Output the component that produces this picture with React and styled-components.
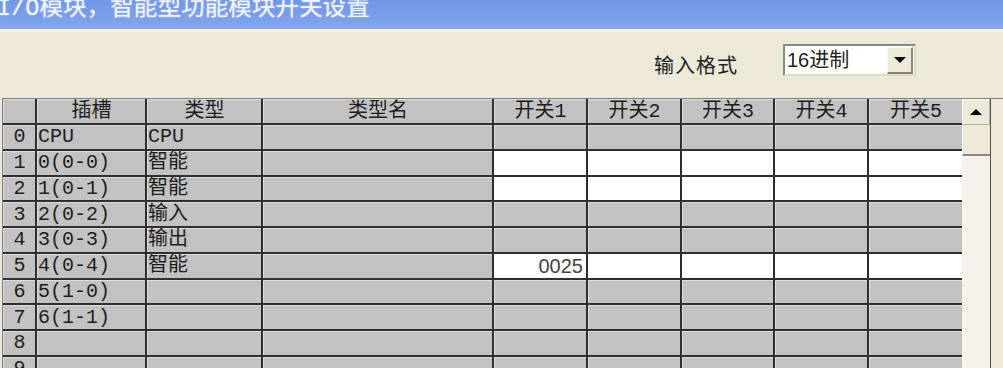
import styled, { createGlobalStyle } from 'styled-components'

const GlobalStyle = createGlobalStyle`
  html, body {
    margin: 0;
    padding: 0;
    background: #ece9d8;
    overflow: hidden;
  }
  #root {
    width: 1003px;
    height: 368px;
  }
`

const CJK = `"Liberation Mono", "Noto Sans CJK SC", monospace`
const SANS = `"Liberation Sans", "Noto Sans CJK SC", sans-serif`

const COLS = [34, 110, 116, 231, 94, 94, 93, 94, 93]
const HEADERS = ['', '插槽', '类型', '类型名', '开关1', '开关2', '开关3', '开关4', '开关5']

const ROWS = [
  { slot: 'CPU', type: 'CPU' },
  { slot: '0(0-0)', type: '智能', edit: true },
  { slot: '1(0-1)', type: '智能', edit: true },
  { slot: '2(0-2)', type: '输入' },
  { slot: '3(0-3)', type: '输出' },
  { slot: '4(0-4)', type: '智能', edit: true, sw: ['0025'] },
  { slot: '5(1-0)', type: '' },
  { slot: '6(1-1)', type: '' },
  { slot: '', type: '' },
  { slot: '', type: '' },
]

const Window = styled.div`
  display: flex;
  flex-direction: column;
  width: 1003px;
  height: 368px;
  overflow: hidden;
  background: #ece9d8;
`

const TitleBar = styled.div`
  height: 29px;
  flex: none;
  display: flex;
  align-items: flex-start;
  background: linear-gradient(180deg, #7096e6 0%, #7b9eea 60%, #86a8ef 100%);
  border-bottom: 3px solid #f3f1e6;
  overflow: hidden;
`

const TitleText = styled.span`
  margin-left: -3px;
  margin-top: -3px;
  font-family: ${CJK};
  font-size: 23.6px;
  line-height: 24px;
  color: #f2f5ff;
  text-shadow: 0 0 2px rgba(255, 255, 255, 0.5);
  white-space: nowrap;
`

const Body = styled.div`
  flex: 1;
  display: flex;
  flex-direction: column;
  min-height: 0;
`

const FormatBar = styled.div`
  height: 66px;
  flex: none;
  display: flex;
  justify-content: flex-end;
  align-items: flex-start;
  gap: 45px;
  padding: 12px 87px 0 0;
  box-sizing: border-box;
`

const FormatLabel = styled.span`
  margin-top: 14px;
  font-family: ${CJK};
  font-size: 20px;
  line-height: 20px;
  letter-spacing: 1px;
  color: #222;
`

const Combo = styled.div`
  width: 133px;
  height: 32px;
  box-sizing: border-box;
  display: flex;
  align-items: center;
  background: #fff;
  border-top: 2px solid #8a8a84;
  border-left: 2px solid #8a8a84;
  border-right: 2px solid #ddd9c8;
  border-bottom: 2px solid #ddd9c8;
  padding: 0 1px 0 2px;
`

const ComboValue = styled.span`
  flex: 1;
  font-family: ${SANS};
  font-size: 20px;
  line-height: 20px;
  color: #222;
`

const ComboButton = styled.div`
  width: 26px;
  height: 27px;
  box-sizing: border-box;
  display: flex;
  align-items: center;
  justify-content: center;
  background: #ece9d8;
  border-top: 1px solid #fbfaf4;
  border-left: 1px solid #fbfaf4;
  border-right: 2px solid #8a8778;
  border-bottom: 2px solid #8a8778;
`

const Triangle = styled.span`
  width: 0;
  height: 0;
  border-left: 6px solid transparent;
  border-right: 6px solid transparent;
  border-top: ${p => (p.$up ? '0' : '6px solid #000')};
  border-bottom: ${p => (p.$up ? '6px solid #000' : '0')};
`

const GridFrame = styled.div`
  flex: 1;
  min-height: 0;
  display: flex;
  margin-left: 2px;
  border-top: 1px solid #7c7c78;
  border-left: 1px solid #7c7c78;
`

const Grid = styled.div`
  display: grid;
  grid-template-columns: ${COLS.map(c => `${c}px`).join(' ')};
  grid-template-rows: 26px;
  grid-auto-rows: 25.75px;
  align-content: start;
`

const Cell = styled.div`
  box-sizing: border-box;
  display: flex;
  align-items: center;
  justify-content: ${p => p.$align || 'flex-start'};
  padding: ${p => (p.$align === 'flex-end' ? '1px 3px 0 0' : '1px 0 0 1px')};
  background: ${p => (p.$white ? '#fff' : '#c2c2c2')};
  border-bottom: 2px solid #2e2e2e;
  border-right: ${p => (p.$last ? 'none' : '2px solid #2e2e2e')};
  box-shadow: ${p => (p.$white ? 'none' : 'inset 1px 1px 0 #dcdcdc')};
  font-family: ${p => (p.$sans ? SANS : CJK)};
  font-size: 20px;
  line-height: 20px;
  color: ${p => (p.$sans ? '#444' : '#1e1e1e')};
  white-space: nowrap;
  overflow: hidden;
`

const VScroll = styled.div`
  width: 29px;
  flex: none;
  display: flex;
  flex-direction: column;
  background: #f4f2ea;
  border-right: 1px solid #55534c;
  box-sizing: border-box;
`

const ScrollButton = styled.div`
  height: 26px;
  box-sizing: border-box;
  display: flex;
  align-items: center;
  justify-content: center;
  background: #ece9d8;
  border-top: 1px solid #fff;
  border-left: 1px solid #fff;
  border-bottom: 1px solid #b8b4a2;
  border-right: 1px solid #b8b4a2;
`

const Thumb = styled.div`
  height: 31px;
  box-sizing: border-box;
  background: #ece9d8;
  border-left: 1px solid #fff;
  border-bottom: 2px solid #8d8a7c;
`

export default function App() {
  return (
    <Window>
      <GlobalStyle />
      <TitleBar>
        <TitleText>I/O模块，智能型功能模块开关设置</TitleText>
      </TitleBar>
      <Body>
        <FormatBar>
          <FormatLabel>输入格式</FormatLabel>
          <Combo>
            <ComboValue>16进制</ComboValue>
            <ComboButton>
              <Triangle />
            </ComboButton>
          </Combo>
        </FormatBar>
        <GridFrame>
          <Grid>
            {HEADERS.map((h, i) => (
              <Cell key={`h${i}`} $align="center" $last={i === HEADERS.length - 1}>
                {h}
              </Cell>
            ))}
            {ROWS.map((r, ri) => (
              <Row key={ri} index={ri} row={r} />
            ))}
          </Grid>
          <VScroll>
            <ScrollButton>
              <Triangle $up />
            </ScrollButton>
            <Thumb />
          </VScroll>
        </GridFrame>
      </Body>
    </Window>
  )
}

function Row({ index, row }) {
  const switches = [0, 1, 2, 3, 4]
  return (
    <>
      <Cell $align="center">{index}</Cell>
      <Cell>{row.slot}</Cell>
      <Cell>{row.type}</Cell>
      <Cell />
      {switches.map(s => (
        <Cell
          key={s}
          $white={row.edit}
          $sans
          $align="flex-end"
          $last={s === switches.length - 1}
        >
          {row.sw && row.sw[s]}
        </Cell>
      ))}
    </>
  )
}
